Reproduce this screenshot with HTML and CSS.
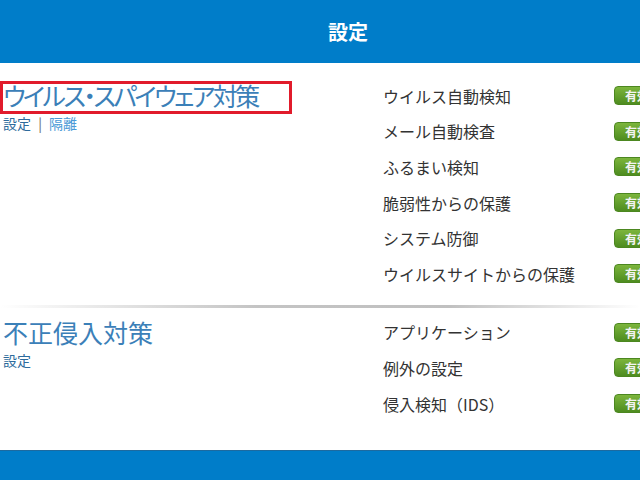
FILE: index.html
```html
<!DOCTYPE html>
<html lang="ja">
  <head>
    <meta charset="UTF-8" />
    <meta name="viewport" content="width=device-width, initial-scale=1.0" />
    <title>設定</title>
    <link rel="stylesheet" href="styles.css">
  </head>

  <body>
    <header class="topbar">
      <h1>設定</h1>
    </header>

    <main class="panel">
      <section class="group first">
        <div class="group-head">
          <h2 class="group-title selected">ウイルス・スパイウェア対策</h2>
          <div class="links">
            <a class="link-main" href="#">設定</a>
            <span class="sep">|</span>
            <a class="link-sub" href="#">隔離</a>
          </div>
        </div>
        <ul class="items">
          <li><span>ウイルス自動検知</span><button class="state">有効</button></li>
          <li><span>メール自動検査</span><button class="state">有効</button></li>
          <li><span>ふるまい検知</span><button class="state">有効</button></li>
          <li><span>脆弱性からの保護</span><button class="state">有効</button></li>
          <li><span>システム防御</span><button class="state">有効</button></li>
          <li><span>ウイルスサイトからの保護</span><button class="state">有効</button></li>
        </ul>
      </section>

      <hr class="divider">

      <section class="group">
        <div class="group-head">
          <h2 class="group-title">不正侵入対策</h2>
          <div class="links">
            <a class="link-main" href="#">設定</a>
          </div>
        </div>
        <ul class="items">
          <li><span>アプリケーション</span><button class="state">有効</button></li>
          <li><span>例外の設定</span><button class="state">有効</button></li>
          <li><span>侵入検知（IDS）</span><button class="state">有効</button></li>
        </ul>
      </section>
    </main>

    <footer class="bottombar"></footer>
  </body>
</html>
```

FILE: styles.css
```css
body {
  font-family: "Noto Sans CJK JP", "Noto Sans", sans-serif;
  margin: 0;
  padding: 0;
  height: 100vh;
  display: flex;
  flex-direction: column;
  overflow: hidden;
  background-color: #fff;
}

.topbar {
  height: 63px;
  flex-shrink: 0;
  display: flex;
  justify-content: center;
  align-items: center;
  padding-left: 56px;
  background-color: #007dc9;
}

.topbar h1 {
  margin: 0;
  font-size: 20px;
  font-weight: bold;
  color: #fff;
  line-height: 1;
}

.panel {
  flex: 1;
  overflow: hidden;
}

.group {
  display: flex;
  padding-top: 15px;
  padding-bottom: 13px;
}

.group + .divider + .group {
  padding-top: 7px;
}

.group-head {
  width: 383px;
  flex-shrink: 0;
  padding-top: 3px;
}

.group-title {
  display: inline-block;
  margin: 0;
  padding: 0 31px 4px 0;
  border: 3px solid transparent;
  font-size: 25px;
  font-weight: normal;
  line-height: 23px;
  color: #3b80b8;
  font-feature-settings: "palt";
}

.group-title.selected {
  border-color: #e11b2b;
  letter-spacing: -2.5px;
}

.links {
  margin-top: 0;
  padding-left: 3px;
  font-size: 14px;
  line-height: 18px;
  font-feature-settings: "palt";
}

.links a {
  text-decoration: none;
}

.link-main {
  color: #2d6b9c;
}

.link-sub {
  color: #4a9ad6;
}

.sep {
  color: #666;
  margin: 0 4px;
}

.items {
  list-style: none;
  margin: 0;
  padding: 0;
  flex: 1;
}

.items li {
  height: 35.6px;
  display: flex;
  align-items: center;
  white-space: nowrap;
}

.items span {
  width: 231px;
  flex-shrink: 0;
  font-size: 16px;
  color: #333;
}

.state {
  width: 46px;
  height: 19px;
  padding: 0 0 0 10px;
  border: 1px solid #4c8720;
  border-radius: 4px;
  background: linear-gradient(#7cb53c, #4e8c20);
  color: #f4f4f4;
  font-family: inherit;
  font-size: 12px;
  font-weight: bold;
  text-align: left;
  line-height: 17px;
}

.divider {
  margin: 0;
  height: 3px;
  border: none;
  background: linear-gradient(to right, rgba(180, 180, 180, 0), #c4c4c4 40%, #c0c0c0 70%, rgba(200, 200, 200, 0));
}

.bottombar {
  height: 29px;
  flex-shrink: 0;
  border-top: 1px solid #1d6aa0;
  background-color: #007dc9;
}
```
